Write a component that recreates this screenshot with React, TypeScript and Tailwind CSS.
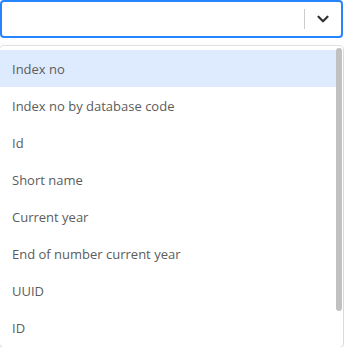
import { ChevronDown } from "lucide-react";

const options = [
  "Index no",
  "Index no by database code",
  "Id",
  "Short name",
  "Current year",
  "End of number current year",
  "UUID",
  "ID",
];

export default function App() {
  return (
    <div className="w-[343px] font-['Open_Sans',sans-serif] text-[13px] text-[#5c5c5c]">
      {/* control */}
      <div className="flex h-[38px] items-center rounded-[4px] border-2 border-[#2684ff] bg-white">
        <div className="flex-1" />
        <div className="flex items-center">
          <span className="h-[20px] w-px bg-[#cccccc]" />
          <div className="flex w-[36px] justify-center text-[#333]">
            <ChevronDown size={18} strokeWidth={3} />
          </div>
        </div>
      </div>

      {/* menu */}
      <div className="relative mt-[8px] h-[301px] overflow-hidden rounded-[4px] bg-white shadow-[0_0_0_1px_rgba(0,0,0,0.1),0_4px_11px_rgba(0,0,0,0.1)]">
        <ul className="pt-[4px] pr-[7px]">
          {options.map((o, i) => (
            <li
              key={o}
              className={
                "flex h-[37px] items-center px-[12px] pt-[3px] " +
                (i === 0 ? "bg-[#deebff]" : "")
              }
            >
              {o}
            </li>
          ))}
        </ul>
        <div className="absolute right-[1px] top-[2px] h-[263px] w-[6px] rounded-full bg-[#c1c1c1]" />
      </div>
    </div>
  );
}
